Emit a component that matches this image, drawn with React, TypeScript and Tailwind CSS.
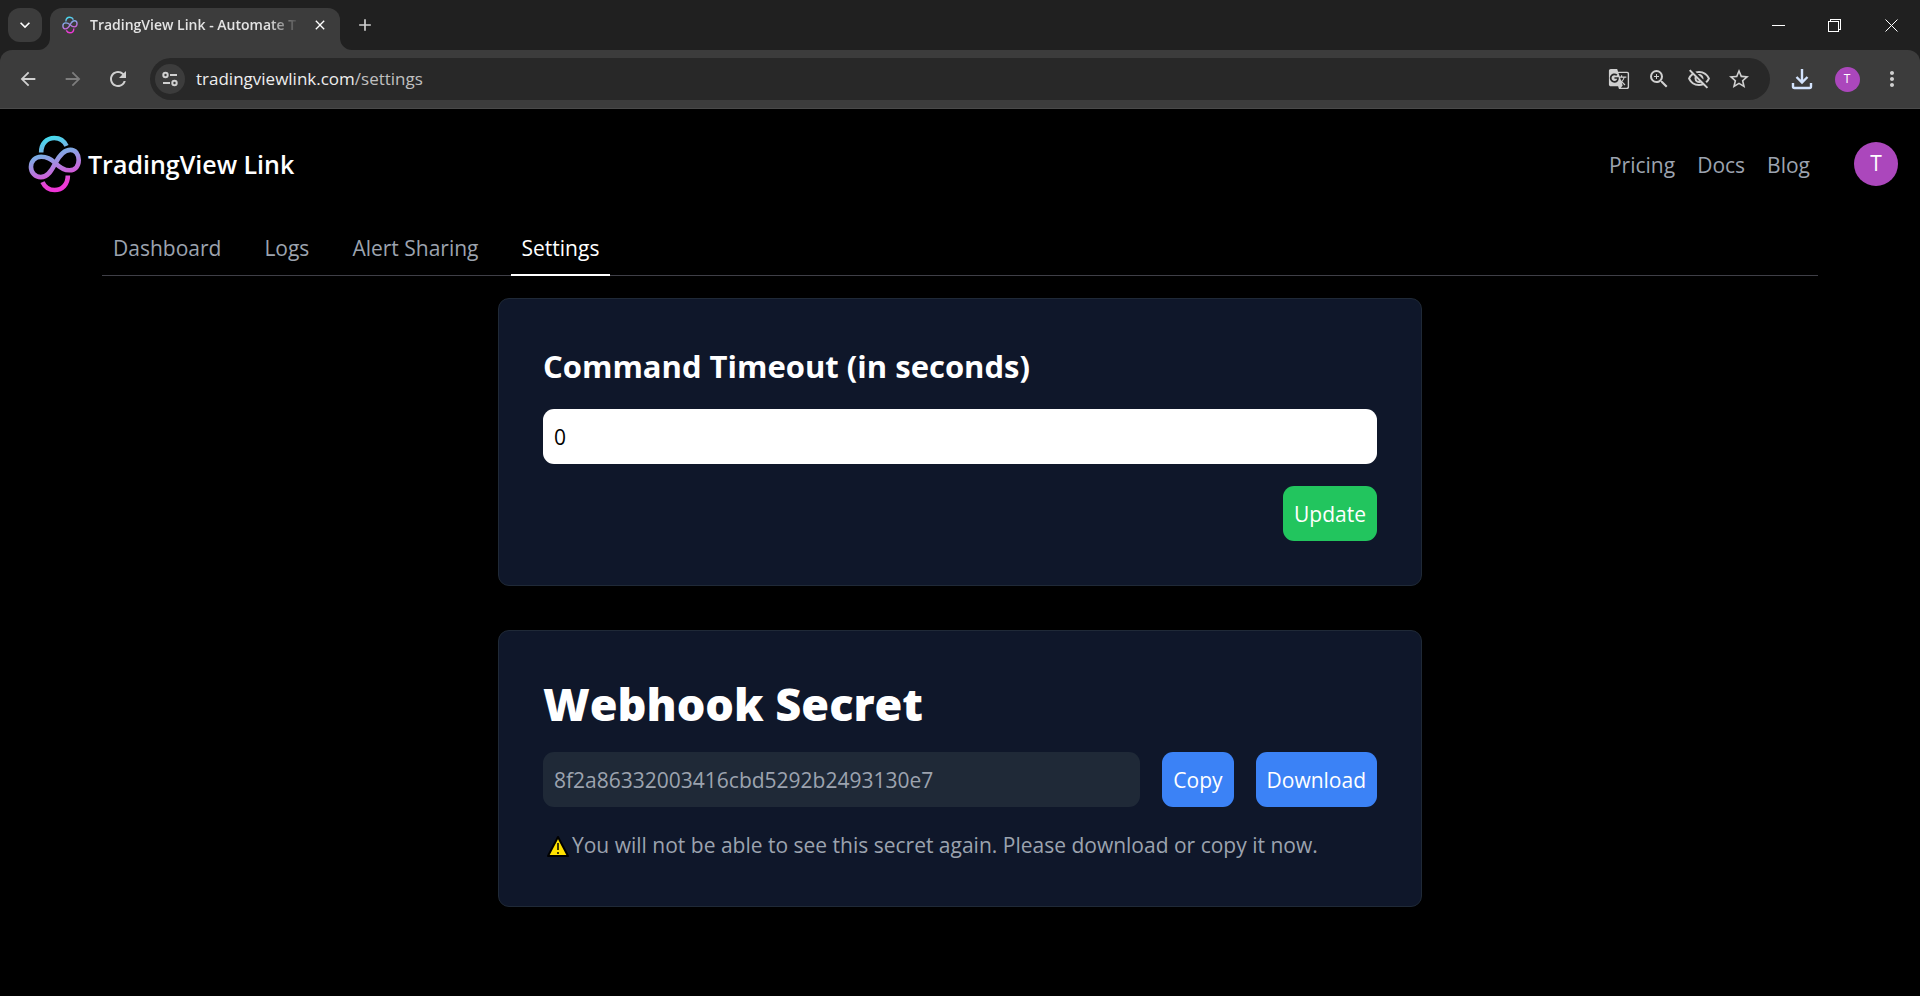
import { useState } from 'react';
import type { ReactNode } from 'react';
import {
  MdAdd,
  MdArrowBack,
  MdArrowForward,
  MdClose,
  MdExpandMore,
  MdGTranslate,
  MdMoreVert,
  MdOutlineVisibilityOff,
  MdRefresh,
  MdStarBorder,
  MdZoomIn,
} from 'react-icons/md';

const navLinks = ['Pricing', 'Docs', 'Blog'];
const tabs = ['Dashboard', 'Logs', 'Alert Sharing', 'Settings'];

function Logo({ id, className }: { id: string; className: string }) {
  return (
    <svg viewBox="24 26 164 176" className={className} fill="none" aria-hidden="true">
      <defs>
        <linearGradient id={id} gradientUnits="userSpaceOnUse" x1="80" y1="30" x2="125" y2="196">
          <stop offset="0" stopColor="#3fe0ee" />
          <stop offset="0.5" stopColor="#a58be0" />
          <stop offset="0.85" stopColor="#ea3fd2" />
          <stop offset="1" stopColor="#f032d8" />
        </linearGradient>
      </defs>
      <g stroke={`url(#${id})`} strokeWidth="14">
        <path d="M64 79C64 52 81 35 104 35c16 0 30 9 37 24" />
        <path d="M145 149c0 27-17 44-40 44-16 0-30-9-37-24" />
        <path d="M107 111C96 100 82 92 64 92c-18 0-31 13-31 31 0 17 13 31 30 31 21 0 33-20 44-42s25-41 46-41c15 0 25 13 25 31s-10 31-28 31c-17 0-31-10-43-22Z" />
      </g>
    </svg>
  );
}

function TuneIcon() {
  return (
    <svg viewBox="0 0 18 18" className="size-[18px]" fill="none" stroke="currentColor" strokeWidth="2">
      <circle cx="4.5" cy="5" r="2.2" />
      <path d="M9 5h7M2 13h7" />
      <circle cx="13.5" cy="13" r="2.2" />
    </svg>
  );
}

function DownloadIcon() {
  return (
    <svg viewBox="0 0 22 22" className="size-[22px]" fill="none" stroke="currentColor" strokeWidth="2.4">
      <path d="M11 1v13M5.5 9l5.5 5.5L16.5 9M2 15v3.500q0 1.500 1.500 1.500h15q1.500 0 1.500-1.500V15" />
    </svg>
  );
}

function WarningIcon() {
  return (
    <svg viewBox="0 0 24 24" className="size-6" aria-hidden="true">
      <path d="M12 3 22 22H2Z" fill="#ffe100" stroke="#000" strokeWidth="2" strokeLinejoin="round" />
      <path d="M12 9v7M12 18v2" stroke="#000" strokeWidth="1.5" />
    </svg>
  );
}

function ToolButton({ label, className = '', children }: { label: string; className?: string; children: ReactNode }) {
  return (
    <button type="button" aria-label={label} className={`flex size-10 items-center justify-center ${className}`}>
      {children}
    </button>
  );
}

function BrowserBar() {
  return (
    <div className="bg-[#202020] text-[#d0d0d0]">
      <div className="flex h-[50px] items-end justify-between">
        <div className="flex h-[42px] items-start">
          <button
            type="button"
            aria-label="Search tabs"
            className="ml-2 flex size-[34px] items-center justify-center rounded-xl bg-[#3c3c3c] text-white"
          >
            <MdExpandMore className="size-5" />
          </button>
          <div className="relative ml-2 flex h-[42px] w-[290px] items-center rounded-t-xl bg-[#3c3c3c] pb-2 pl-3 pr-2">
            <svg viewBox="0 0 12 12" className="absolute -left-3 bottom-0 size-3 fill-[#3c3c3c]">
              <path d="M12 0v12H0A12 12 0 0 0 12 0Z" />
            </svg>
            <svg viewBox="0 0 12 12" className="absolute -right-3 bottom-0 size-3 fill-[#3c3c3c]">
              <path d="M0 0v12h12A12 12 0 0 1 0 0Z" />
            </svg>
            <Logo id="favicon" className="h-[18px] w-4" />
            <span className="ml-3 flex-1 whitespace-nowrap text-sm font-semibold text-[#e3e3e3] [mask-image:linear-gradient(to_right,black_85%,transparent)]">
              TradingView Link - Automate T
            </span>
            <button type="button" aria-label="Close tab" className="ml-2 flex size-6 items-center justify-center text-white">
              <MdClose className="size-4" />
            </button>
          </div>
          <button type="button" aria-label="New tab" className="ml-2 flex size-[34px] items-center justify-center">
            <MdAdd className="size-5" />
          </button>
        </div>
        <div className="flex h-[50px] text-white">
          <button type="button" aria-label="Minimize" className="flex w-14 items-center justify-center">
            <svg viewBox="0 0 13 13" className="size-[13px]" fill="none" stroke="currentColor" shapeRendering="crispEdges">
              <path d="M0 6.5h13" />
            </svg>
          </button>
          <button type="button" aria-label="Restore" className="flex w-14 items-center justify-center">
            <svg viewBox="0 0 13 13" className="size-[13px]" fill="none" stroke="currentColor" shapeRendering="crispEdges">
              <path d="M.5 2.5h10v10H.5ZM2.5 2V.5h10v10H11" />
            </svg>
          </button>
          <button type="button" aria-label="Close" className="flex w-[58px] items-center justify-center">
            <svg viewBox="0 0 13 13" className="size-[13px]" fill="none" stroke="currentColor">
              <path d="m.5.5 12 12M12.5.5l-12 12" />
            </svg>
          </button>
        </div>
      </div>

      <div className="flex h-[59px] items-center rounded-t-xl border-b border-[#4a4a4a] bg-[#3c3c3c] px-2">
        <div className="flex gap-[5px]">
          <ToolButton label="Back">
            <MdArrowBack className="size-[22px]" />
          </ToolButton>
          <ToolButton label="Forward" className="text-[#7d7d7d]">
            <MdArrowForward className="size-[22px]" />
          </ToolButton>
          <ToolButton label="Reload">
            <MdRefresh className="size-6" />
          </ToolButton>
        </div>
        <div className="ml-3 flex h-[42px] flex-1 items-center rounded-full bg-[#282828] pl-[5px] pr-[11px]">
          <button
            type="button"
            aria-label="View site information"
            className="flex size-[30px] items-center justify-center rounded-full bg-[#3c3c3c]"
          >
            <TuneIcon />
          </button>
          <p className="ml-[11px] flex-1 text-[17px] text-[#c0c0c0]">
            <span className="text-[#eeeeee]">tradingviewlink.com</span>/settings
          </p>
          <ToolButton label="Translate this page">
            <MdGTranslate className="size-[22px]" />
          </ToolButton>
          <ToolButton label="Zoom">
            <MdZoomIn className="size-6" />
          </ToolButton>
          <ToolButton label="Third-party cookies blocked">
            <MdOutlineVisibilityOff className="size-6" />
          </ToolButton>
          <ToolButton label="Bookmark this tab">
            <MdStarBorder className="size-6" />
          </ToolButton>
        </div>
        <ToolButton label="Downloads" className="ml-3 text-[#d3e3fd]">
          <DownloadIcon />
        </ToolButton>
        <ToolButton label="Profile" className="ml-[5px]">
          <span className="flex size-[25px] items-center justify-center rounded-full bg-[#ab47bc] text-xs text-white">T</span>
        </ToolButton>
        <ToolButton label="More" className="ml-[5px]">
          <MdMoreVert className="size-6" />
        </ToolButton>
      </div>
    </div>
  );
}

function SiteHeader() {
  return (
    <header className="flex h-[110px] items-center justify-between pl-7 pr-[22px]">
      <a href="#" className="flex items-center gap-1.5">
        <Logo id="brand" className="h-[58px] w-[54px]" />
        <span className="pt-0.5 text-[25px] font-semibold text-white">TradingView Link</span>
      </a>
      <div className="flex items-center">
        <nav className="flex gap-[22px] pt-[3px]">
          {navLinks.map((item) => (
            <a key={item} href="#" className="text-[21px] text-[#9ca3af] hover:text-white">
              {item}
            </a>
          ))}
        </nav>
        <button
          type="button"
          aria-label="Account"
          className="ml-11 flex size-11 items-center justify-center rounded-full bg-[#ab47bc] text-[21px] text-white"
        >
          T
        </button>
      </div>
    </header>
  );
}

function Card({ children }: { children: ReactNode }) {
  return <section className="rounded-[11px] border border-[#1f2937] bg-[#0f172a] p-11 text-white">{children}</section>;
}

export default function App() {
  const [timeout, setTimeoutValue] = useState('0');
  const [activeTab, setActiveTab] = useState('Settings');

  return (
    <div className="min-h-screen bg-black font-['Open_Sans','Noto_Sans',sans-serif]">
      <BrowserBar />
      <SiteHeader />

      <main className="px-[102px] pt-[3px]">
        <nav className="flex gap-[21px] border-b border-zinc-700">
          {tabs.map((tab) => (
            <a
              key={tab}
              href="#"
              onClick={() => setActiveTab(tab)}
              className={`-mb-px border-b-2 px-[11px] py-2 text-[21px] leading-9 ${
                tab === activeTab ? 'border-white text-white' : 'border-transparent text-[#9ca3af]'
              }`}
            >
              {tab}
            </a>
          ))}
        </nav>

        <div className="mx-auto mt-[22px] flex max-w-[924px] flex-col gap-11">
          <Card>
            <form className="flex flex-col" onSubmit={(e) => e.preventDefault()}>
              <label htmlFor="timeout" className="pt-0.5 text-[31px] font-bold leading-[42px]">
                Command Timeout (in seconds)
              </label>
              <input
                id="timeout"
                value={timeout}
                onChange={(e) => setTimeoutValue(e.target.value)}
                className="mt-[22px] h-[55px] w-full rounded-[11px] bg-white px-[11px] text-[21px] text-black"
              />
              <button type="submit" className="mt-[22px] h-[55px] self-end rounded-[11px] bg-[#22c55e] px-[11px] pt-0.5 text-[21px]">
                Update
              </button>
            </form>
          </Card>

          <Card>
            <h1 className="pt-[3px] text-[45px] font-extrabold leading-[52px]">
              <label htmlFor="secret">Webhook Secret</label>
            </h1>
            <div className="mt-[22px] flex gap-[22px]">
              <input
                id="secret"
                readOnly
                value="8f2a86332003416cbd5292b2493130e7"
                className="h-[55px] min-w-0 flex-1 rounded-[11px] bg-[#1f2937] px-[11px] text-[21px] text-[#9ca3af]"
              />
              <button type="button" className="h-[55px] rounded-[11px] bg-[#3b82f6] px-[11px] pt-0.5 text-[21px]">
                Copy
              </button>
              <button type="button" className="h-[55px] rounded-[11px] bg-[#3b82f6] px-[11px] pt-0.5 text-[21px]">
                Download
              </button>
            </div>
            <p className="mt-[22px] flex items-center gap-0.5 pl-[3px] text-[21px] leading-[33px] text-[#9ca3af]">
              <WarningIcon />
              You will not be able to see this secret again. Please download or copy it now.
            </p>
          </Card>
        </div>
      </main>
    </div>
  );
}
